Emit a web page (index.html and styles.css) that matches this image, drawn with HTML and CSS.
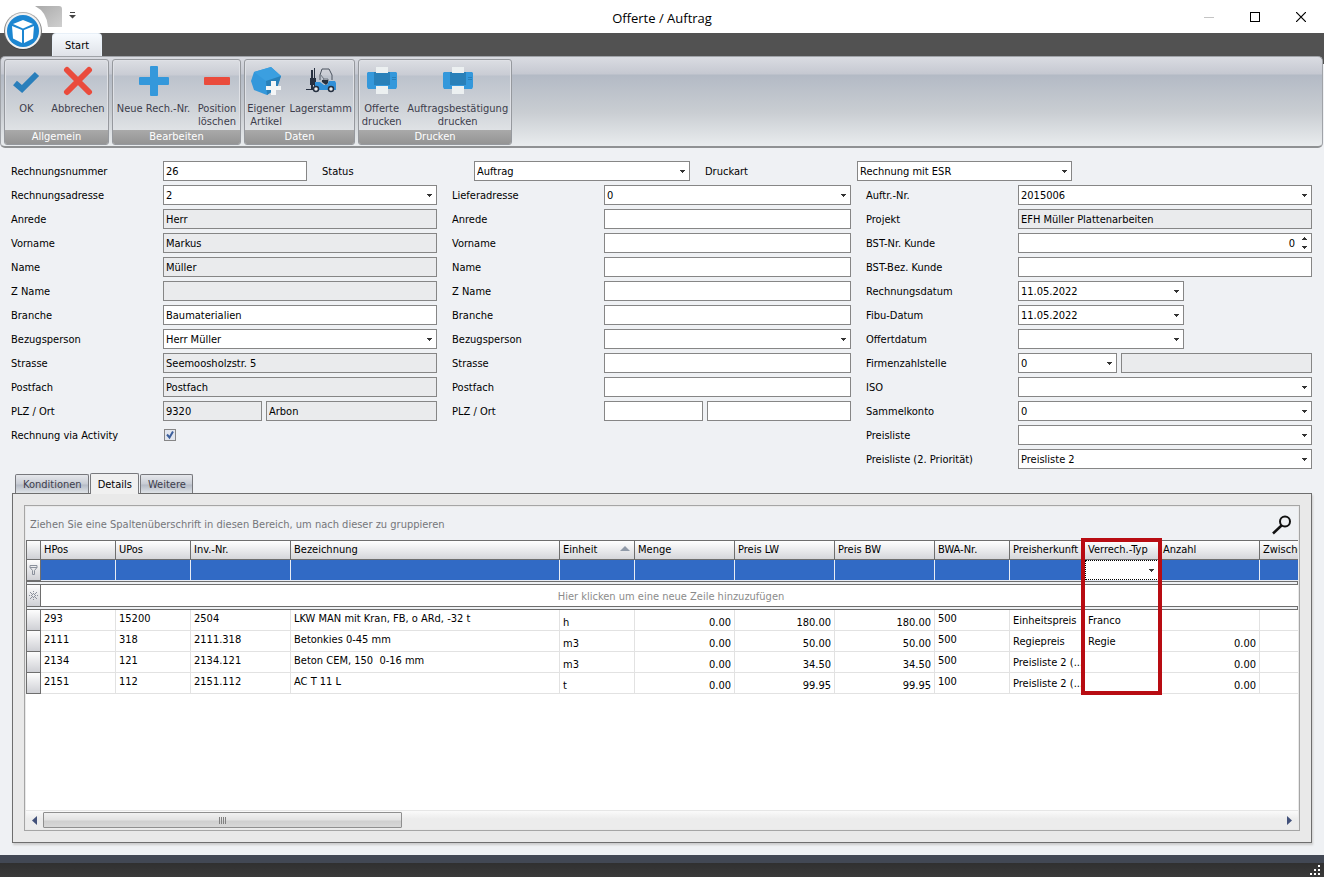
FILE: index.html
```html
<!doctype html>
<html lang="de">
<head>
    <meta charset="utf-8">
    <title>Offerte / Auftrag</title>
    <link rel="stylesheet" href="styles.css">
</head>
<body>

<header class="titlebar">
    <div class="quick">
        <svg class="orb" width="44" height="44" viewBox="0 0 44 44">
            <defs>
                <linearGradient id="ring" x1="0" y1="0" x2="0" y2="1">
                    <stop offset="0" stop-color="#b4b4b4"/>
                    <stop offset="1" stop-color="#3c3c3c"/>
                </linearGradient>
            </defs>
            <circle cx="22" cy="22" r="19" fill="url(#ring)"/>
            <circle cx="22" cy="22" r="18" fill="#f2f2f2"/>
            <circle cx="22" cy="22" r="16" fill="#1c86d1"/>
            <path d="M22 11l10 4-10 4.500-10-4.500z" fill="#fff"/>
            <path d="M11 17l10 4v13l-9-4.500zM33 17l-10 4v13l9-4.500z" fill="#fff"/>
        </svg>
        <svg class="quick-bg" width="42" height="21" viewBox="0 0 42 21">
            <defs>
                <linearGradient id="qbg" x1="0" y1="0" x2="1" y2="1">
                    <stop offset="0" stop-color="#a9a9a9"/>
                    <stop offset="1" stop-color="#cfcfcf"/>
                </linearGradient>
            </defs>
            <path d="M14 0h24q3 0 3 3v18H27Q26 6 14 0z" fill="url(#qbg)"/>
        </svg>
        <button class="quick-more" aria-label="Symbolleiste anpassen">
            <svg width="7" height="7" viewBox="0 0 7 7"><path d="M1 0h5v1H1zM0 3h7L3.500 6.500z" fill="#444"/></svg>
        </button>
    </div>
    <h1>Offerte / Auftrag</h1>
    <div class="winbtns">
        <button aria-label="Minimieren"><svg width="10" height="10"><path d="M0 5h10v1H0z" fill="#c4c4c4"/></svg></button>
        <button aria-label="Maximieren"><svg width="10" height="10"><rect x=".5" y=".5" width="9" height="9" fill="none" stroke="#000"/></svg></button>
        <button aria-label="Schliessen"><svg width="10" height="10"><path d="M0 0l10 10M10 0L0 10" stroke="#000" stroke-width="1.200"/></svg></button>
    </div>
</header>

<nav class="ribbon-tabs"><a class="ribbon-tab" href="#start">Start</a></nav>

<div class="ribbon-back">
<div class="ribbon" id="start">
    <section class="group g-allgemein">
        <div class="group-items">
            <button>
                <svg width="30" height="30" viewBox="0 0 30 30"><path d="M4 17l7 6L26 8" fill="none" stroke="#2a7fbb" stroke-width="6"/></svg>
                OK
            </button>
            <button>
                <svg width="30" height="30" viewBox="0 0 30 30"><path d="M4 4l22 22M26 4L4 26" fill="none" stroke="#ea4b3c" stroke-width="6" stroke-linecap="round"/></svg>
                Abbrechen
            </button>
        </div>
        <h2>Allgemein</h2>
    </section>
    <section class="group g-bearbeiten">
        <div class="group-items">
            <button>
                <svg width="30" height="30" viewBox="0 0 30 30"><path d="M12 0h6q1 0 1 1v10h10q1 0 1 1v6q0 1-1 1H19v10q0 1-1 1h-6q-1 0-1-1V19H1q-1 0-1-1v-6q0-1 1-1h10V1q0-1 1-1z" fill="#3498db"/></svg>
                Neue Rech.-Nr.
            </button>
            <button>
                <svg width="30" height="30" viewBox="0 0 30 30"><rect x="2" y="11" width="26" height="8" rx="1" fill="#ea4b3c"/></svg>
                Position<br>löschen
            </button>
        </div>
        <h2>Bearbeiten</h2>
    </section>
    <section class="group g-daten">
        <div class="group-items">
            <button>
                <svg width="30" height="30" viewBox="0 0 30 30">
                    <path d="M20 1l10 9-4 12-10 7-13-5L0 15 3 6z" fill="#3498db"/>
                    <path d="M20 1l10 9-15 5L3 6z" fill="#3b9fe0"/>
                    <path d="M30 10l-4 12-10 7-1-14z" fill="#2980b9"/>
                    <path d="M20 15h5v5h5v4h-5v5h-5v-5h-5v-4h5z" fill="#f4f6f7"/>
                </svg>
                Eigener<br>Artikel
            </button>
            <button>
                <svg width="30" height="30" viewBox="0 0 30 30">
                    <path d="M5 4h2v19H5zM8 2h1v21H8zM0 23h8v1H0zM4 12h6v7H4z" fill="#263040"/>
                    <path d="M14 14V9l2-6h7l3 6v5" fill="none" stroke="#4b535f"/>
                    <path d="M14 8l4 5-2 3M18 13h4v3" fill="none" stroke="#6e7680"/>
                    <path d="M9 16h5l4 3h3l2-4h6l1 2v7H9z" fill="#2f8fd8"/>
                    <path d="M16 14h6v3l-2 2-4-3z" fill="#263040"/>
                    <circle cx="10" cy="23" r="2.500" fill="#eee" stroke="#263040" stroke-width="1.500"/>
                    <circle cx="25" cy="23" r="2.500" fill="#eee" stroke="#263040" stroke-width="1.500"/>
                </svg>
                Lagerstamm
            </button>
        </div>
        <h2>Daten</h2>
    </section>
    <section class="group g-drucken">
        <div class="group-items">
            <button>
                <svg width="30" height="30" viewBox="0 0 30 30">
                    <path d="M1 6h28l1 1v14l-1 2H1l-1-2V7z" fill="#3498db"/>
                    <path d="M7 6h16v13H7zM25 11h4v1h-4zM25 13h4v1h-4z" fill="#2980b9"/>
                    <path d="M9 1h12v6H9zM9 20h12v8H9z" fill="#ecf0f1"/>
                </svg>
                Offerte<br>drucken
            </button>
            <button>
                <svg width="30" height="30" viewBox="0 0 30 30">
                    <path d="M1 6h28l1 1v14l-1 2H1l-1-2V7z" fill="#3498db"/>
                    <path d="M7 6h16v13H7zM25 11h4v1h-4zM25 13h4v1h-4z" fill="#2980b9"/>
                    <path d="M9 1h12v6H9zM9 20h12v8H9z" fill="#ecf0f1"/>
                </svg>
                Auftragsbestätigung<br>drucken
            </button>
        </div>
        <h2>Drucken</h2>
    </section>
</div>
</div>

<main>
    <form>
        <div class="head">
            <div class="row"><label for="rnr">Rechnungsnummer</label><input id="rnr" value="26"></div>
            <div class="row"><label for="status">Status</label><select id="status"><option>Auftrag</option></select></div>
            <div class="row"><label for="druckart">Druckart</label><select id="druckart"><option>Rechnung mit ESR</option></select></div>
        </div>
        <div class="cols">
            <div class="col">
                <div class="row"><label for="radr">Rechnungsadresse</label><select id="radr"><option>2</option></select></div>
                <div class="row"><label for="r1">Anrede</label><input id="r1" value="Herr" readonly></div>
                <div class="row"><label for="r2">Vorname</label><input id="r2" value="Markus" readonly></div>
                <div class="row"><label for="r3">Name</label><input id="r3" value="Müller" readonly></div>
                <div class="row"><label for="r4">Z Name</label><input id="r4" readonly></div>
                <div class="row"><label for="r5">Branche</label><input id="r5" value="Baumaterialien"></div>
                <div class="row"><label for="r6">Bezugsperson</label><select id="r6"><option>Herr Müller</option></select></div>
                <div class="row"><label for="r7">Strasse</label><input id="r7" value="Seemoosholzstr. 5" readonly></div>
                <div class="row"><label for="r8">Postfach</label><input id="r8" value="Postfach" readonly></div>
                <div class="row"><label for="r9">PLZ / Ort</label>
                    <div class="pair"><input id="r9" value="9320" readonly><input aria-label="Ort" value="Arbon" readonly></div>
                </div>
                <div class="row"><label for="act">Rechnung via Activity</label><input type="checkbox" id="act" checked></div>
            </div>
            <div class="col">
                <div class="row"><label for="ladr">Lieferadresse</label><select id="ladr"><option>0</option></select></div>
                <div class="row"><label for="l1">Anrede</label><input id="l1"></div>
                <div class="row"><label for="l2">Vorname</label><input id="l2"></div>
                <div class="row"><label for="l3">Name</label><input id="l3"></div>
                <div class="row"><label for="l4">Z Name</label><input id="l4"></div>
                <div class="row"><label for="l5">Branche</label><input id="l5"></div>
                <div class="row"><label for="l6">Bezugsperson</label><select id="l6"><option></option></select></div>
                <div class="row"><label for="l7">Strasse</label><input id="l7"></div>
                <div class="row"><label for="l8">Postfach</label><input id="l8"></div>
                <div class="row"><label for="l9">PLZ / Ort</label>
                    <div class="pair"><input id="l9"><input aria-label="Ort"></div>
                </div>
            </div>
            <div class="col">
                <div class="row"><label for="a1">Auftr.-Nr.</label><select id="a1"><option>2015006</option></select></div>
                <div class="row"><label for="a2">Projekt</label><input id="a2" value="EFH Müller Plattenarbeiten" readonly></div>
                <div class="row"><label for="a3">BST-Nr. Kunde</label><input type="number" id="a3" value="0"></div>
                <div class="row"><label for="a4">BST-Bez. Kunde</label><input id="a4"></div>
                <div class="row"><label for="a5">Rechnungsdatum</label><select class="date" id="a5"><option>11.05.2022</option></select></div>
                <div class="row"><label for="a6">Fibu-Datum</label><select class="date" id="a6"><option>11.05.2022</option></select></div>
                <div class="row"><label for="a7">Offertdatum</label><select class="date" id="a7"><option></option></select></div>
                <div class="row"><label for="a8">Firmenzahlstelle</label>
                    <div class="pair"><select id="a8"><option>0</option></select><input aria-label="Zahlstelle" readonly></div>
                </div>
                <div class="row"><label for="a9">ISO</label><select id="a9"><option></option></select></div>
                <div class="row"><label for="a10">Sammelkonto</label><select id="a10"><option>0</option></select></div>
                <div class="row"><label for="a11">Preisliste</label><select id="a11"><option></option></select></div>
                <div class="row"><label for="a12">Preisliste (2. Priorität)</label><select id="a12"><option>Preisliste 2</option></select></div>
            </div>
        </div>
    </form>

    <div class="tabs">
        <button>Konditionen</button>
        <button class="active">Details</button>
        <button>Weitere</button>
    </div>
    <section class="panel">
        <div class="grid">
            <div class="groupbar">
                <span>Ziehen Sie eine Spaltenüberschrift in diesen Bereich, um nach dieser zu gruppieren</span>
                <button aria-label="Suchen">
                    <svg width="20" height="20" viewBox="0 0 20 20"><circle cx="13" cy="6.500" r="5" fill="none" stroke="#111" stroke-width="2"/><path d="M9.500 10.500L1 18.500" stroke="#111" stroke-width="2.500"/></svg>
                </button>
            </div>
            <div class="tablebox">
                <table>
                    <colgroup>
                        <col class="w15"><col class="w75"><col class="w75"><col class="w100"><col class="w269"><col class="w75"><col class="w100"><col class="w100"><col class="w100"><col class="w75"><col class="w75"><col class="w75"><col class="w100"><col>
                    </colgroup>
                    <thead>
                        <tr>
                            <th></th><th>HPos</th><th>UPos</th><th>Inv.-Nr.</th><th>Bezeichnung</th><th class="sorted">Einheit</th><th>Menge</th><th>Preis LW</th><th>Preis BW</th><th>BWA-Nr.</th><th>Preisherkunft</th><th>Verrech.-Typ</th><th>Anzahl</th><th>Zwische</th>
                        </tr>
                    </thead>
                    <tbody>
                        <tr class="filter">
                            <td class="rowhead"><svg width="9" height="10" viewBox="0 0 9 10"><path d="M1 .5h7v2L5.500 5.500v4h-2v-4L1 2.500zM1 2.500h7" fill="none" stroke="#8b919c"/></svg></td>
                            <td></td><td></td><td></td><td></td><td></td><td></td><td></td><td></td><td></td><td></td><td class="edit"><select aria-label="Filter Verrech.-Typ"><option></option></select></td><td></td><td></td>
                        </tr>
                        <tr class="sep"><td colspan="14"></td></tr>
                        <tr class="new">
                            <td class="rowhead"><svg width="9" height="9" viewBox="0 0 9 9"><path d="M4 0h1v1H4zM4 2h1v1H4zM4 6h1v1H4zM4 8h1v1H4zM0 4h1v1H0zM2 4h1v1H2zM6 4h1v1H6zM8 4h1v1H8zM1 1h1v1H1zM3 3h1v1H3zM5 5h1v1H5zM7 7h1v1H7zM7 1h1v1H7zM5 3h1v1H5zM3 5h1v1H3zM1 7h1v1H1zM2 2h1v1H2zM6 6h1v1H6zM6 2h1v1H6zM2 6h1v1H2z" fill="#8b919c"/></svg></td>
                            <td colspan="13">Hier klicken um eine neue Zeile hinzuzufügen</td>
                        </tr>
                        <tr class="sep"><td colspan="14"></td></tr>
                        <tr>
                            <td class="rowhead"></td><td>293</td><td>15200</td><td>2504</td><td>LKW MAN mit Kran, FB, o ARd, -32 t</td><td class="unit">h</td><td class="num">0.00</td><td class="num">180.00</td><td class="num">180.00</td><td>500</td><td class="mid">Einheitspreis</td><td class="mid">Franco</td><td class="num"></td><td></td>
                        </tr>
                        <tr>
                            <td class="rowhead"></td><td>2111</td><td>318</td><td>2111.318</td><td>Betonkies 0-45 mm</td><td class="unit">m3</td><td class="num">0.00</td><td class="num">50.00</td><td class="num">50.00</td><td>500</td><td class="mid">Regiepreis</td><td class="mid">Regie</td><td class="num">0.00</td><td></td>
                        </tr>
                        <tr>
                            <td class="rowhead"></td><td>2134</td><td>121</td><td>2134.121</td><td>Beton CEM, 150&nbsp; 0-16 mm</td><td class="unit">m3</td><td class="num">0.00</td><td class="num">34.50</td><td class="num">34.50</td><td>500</td><td class="mid">Preisliste 2 (...</td><td></td><td class="num">0.00</td><td></td>
                        </tr>
                        <tr>
                            <td class="rowhead"></td><td>2151</td><td>112</td><td>2151.112</td><td>AC T 11 L</td><td class="unit">t</td><td class="num">0.00</td><td class="num">99.95</td><td class="num">99.95</td><td>100</td><td class="mid">Preisliste 2 (...</td><td></td><td class="num">0.00</td><td></td>
                        </tr>
                    </tbody>
                </table>
                <div class="marker"></div>
            </div>
            <div class="scrollbar">
                <button aria-label="Nach links"><svg width="5" height="9"><path d="M5 0v9L0 4.500z" fill="#42517a"/></svg></button>
                <div class="track"><div class="thumb"><i></i><i></i><i></i><i></i></div></div>
                <button aria-label="Nach rechts"><svg width="5" height="9"><path d="M0 0v9l5-4.500z" fill="#42517a"/></svg></button>
            </div>
        </div>
    </section>
</main>

<footer>
    <svg width="11" height="11" viewBox="0 0 11 11"><path d="M8 0h2v2H8zM4 4h2v2H4zM8 4h2v2H8zM0 8h2v2H0zM4 8h2v2H4zM8 8h2v2H8z" fill="#fff"/></svg>
</footer>

</body>
</html>
```
FILE: styles.css
```css
* {
    box-sizing: border-box;
}
body {
    margin: 0;
    min-height: 100vh;
    display: flex;
    flex-direction: column;
    background: #eff1f4;
    color: #000;
    font: 11px/14px "DejaVu Sans Condensed", "Noto Sans", sans-serif;
}
button, input, select {
    font: inherit;
    color: inherit;
    border-radius: 0;
    margin: 0;
}
button {
    border: 0;
    padding: 0;
    background: none;
}
h1, h2 {
    margin: 0;
    font-weight: normal;
}

/* Titelleiste */
.titlebar {
    position: relative;
    height: 33px;
    background: #fff;
    display: flex;
    justify-content: space-between;
}
.titlebar h1 {
    font: 13px/36px "Open Sans", sans-serif;
}
.quick, .winbtns {
    flex: 1;
    display: flex;
}
.winbtns {
    justify-content: flex-end;
}
.winbtns button {
    width: 46px;
    height: 33px;
    display: flex;
    align-items: center;
    justify-content: center;
}
.orb {
    position: absolute;
    left: 1px;
    top: 9px;
    z-index: 2;
}
.quick-bg {
    margin: 6px 6px 0 21px;
}
.quick-more {
    height: 32px;
}

/* Ribbon */
.ribbon-tabs {
    height: 23px;
    padding-left: 52px;
    background: #525252;
}
.ribbon-tab {
    display: block;
    width: 50px;
    height: 23px;
    border-radius: 4px 4px 0 0;
    background: linear-gradient(#f7fbff, #dfe2e8);
    border: 1px solid #e8f0f8;
    border-bottom: 0;
    color: #000;
    line-height: 23px;
    text-align: center;
    text-decoration: none;
}
.ribbon-back {
    background: linear-gradient(#525252 8px, #eff1f4 8px);
}
.ribbon {
    display: flex;
    gap: 3px;
    height: 92px;
    padding: 2px 3px;
    margin-right: 1px;
    border: 1px solid #a0a3a8;
    border-bottom: 2px solid #8f9193;
    border-radius: 5px;
    background: linear-gradient(#dadce2, #c5c8d1 17px, #b3bac5 18px, #c9cdd2 55px, #e9ecee);
}
.group {
    display: flex;
    flex-direction: column;
    height: 86px;
    border: 1px solid #96999e;
    border-radius: 3px;
    overflow: hidden;
    background: linear-gradient(#dcdee3, #c9ccd4 15px, #bcc2cc 16px, #d0d4d9 50px, #dfe2e5 70px);
    box-shadow: inset 0 0 0 1px #dfe1e6;
}
.g-allgemein {
    width: 105px;
}
.g-bearbeiten {
    width: 129px;
}
.g-daten {
    width: 111px;
}
.g-drucken {
    width: 154px;
}
.group-items {
    flex: 1;
    display: flex;
    justify-content: space-around;
    align-items: flex-start;
}
.group-items button {
    padding: 6px 0 0;
    min-width: 36px;
    line-height: 13px;
    color: #3d3d4c;
    white-space: nowrap;
}
.group-items button svg {
    display: block;
    margin: 0 auto 6px;
}
.group h2 {
    background: linear-gradient(#a9a9a9, #949494);
    color: #fff;
    font-size: 11px;
    line-height: 14px;
    text-align: center;
}

/* Formular */
main {
    flex: 1;
    display: flex;
    flex-direction: column;
    padding: 13px 12px 12px 11px;
}
.head {
    display: grid;
    grid-template-columns: 296fr 368fr 367fr 225fr;
    gap: 15px;
    margin-bottom: 4px;
}
.cols {
    display: grid;
    grid-template-columns: 426fr 399fr 446fr;
    gap: 15px;
}
.col {
    display: flex;
    flex-direction: column;
    gap: 4px;
}
.row {
    display: grid;
    grid-template-columns: 152px 1fr;
    align-items: center;
    height: 20px;
}
.row label {
    padding-top: 2px;
}
.row input, .row select {
    width: 100%;
    min-width: 0;
    height: 20px;
    padding: 0 2px;
    border: 1px solid #868686;
    background: #fff;
    outline: 0;
}
.row select {
    padding-top: 1px;
}
.row input[readonly] {
    background: #eaebed;
}
.row select, .edit select {
    appearance: none;
    background: #fff url("data:image/svg+xml,%3Csvg xmlns='http://www.w3.org/2000/svg' width='5' height='3'%3E%3Cpath d='M0 0h5v1H0zM1 1h3v1H1zM2 2h1v1H2z' fill='%23333'/%3E%3C/svg%3E") no-repeat right 4px center;
}
.row .date {
    width: 166px;
}
.pair {
    display: grid;
    grid-template-columns: 99px 1fr;
    gap: 4px;
}
.row input[type=number] {
    appearance: textfield;
    padding-right: 16px;
    text-align: right;
    background: #fff url("data:image/svg+xml,%3Csvg xmlns='http://www.w3.org/2000/svg' width='5' height='12'%3E%3Cpath d='M2 0h1v1H2zM1 1h3v1H1zM0 2h5v1H0zM0 9h5v1H0zM1 10h3v1H1zM2 11h1v1H2z' fill='%23333'/%3E%3C/svg%3E") no-repeat right 4px center;
}
.row input[type=number]::-webkit-inner-spin-button {
    display: none;
}
.row input[type=checkbox] {
    appearance: none;
    width: 12px;
    height: 12px;
    padding: 0;
    margin-left: 1px;
    background: #f2f4f8;
}
.row input[type=checkbox]:checked {
    background: #e2e6ee url("data:image/svg+xml,%3Csvg xmlns='http://www.w3.org/2000/svg' width='10' height='10'%3E%3Cpath d='M2 4.500l2.500 3L8 1.500' fill='none' stroke='%233c5f9c' stroke-width='2'/%3E%3C/svg%3E") no-repeat center;
}

/* Register */
.tabs {
    display: flex;
    align-items: flex-end;
    gap: 1px;
    height: 21px;
    margin: 4px 0 -1px 4px;
    z-index: 1;
}
.tabs button {
    height: 19px;
    padding: 2px 6px 0 7px;
    margin-bottom: 1px;
    border: 1px solid #77787c;
    border-bottom: 0;
    border-radius: 2px 2px 0 0;
    background: linear-gradient(#e6e8ec, #c8ccd4 9px, #b5bbc6 10px, #dfe3e7);
    color: #3d3d4c;
}
.tabs .active {
    height: 21px;
    margin-bottom: 0;
    background: #f0f0f0;
    color: #000;
}
.panel {
    flex: 1;
    display: flex;
    min-height: 350px;
    margin-left: 1px;
    padding: 11px;
    border: 1px solid #6e6e6e;
    background: #e9e9e9;
    box-shadow: 1px 2px 2px #ccc;
}
.grid {
    flex: 1;
    min-width: 0;
    display: flex;
    flex-direction: column;
    border: 1px solid #a5a5a5;
    padding: 1px;
}
.groupbar {
    display: flex;
    justify-content: space-between;
    align-items: center;
    height: 33px;
    padding: 2px 6px 0 4px;
    background: #eff1f4;
    color: #75767a;
}
.groupbar button {
    display: flex;
}
.tablebox {
    position: relative;
    flex: 1;
    background: #fff;
}

/* Tabelle */
table {
    width: 100%;
    table-layout: fixed;
    border-collapse: separate;
    border-spacing: 0;
}
.w15 {
    width: 15px;
}
.w75 {
    width: 75px;
}
.w100 {
    width: 100px;
}
.w269 {
    width: 269px;
}
th, td {
    height: 21px;
    padding: 2px 3px 0;
    border-right: 1px solid #e2e2e2;
    border-bottom: 1px solid #e2e2e2;
    text-align: left;
    vertical-align: top;
    font-weight: normal;
    line-height: 14px;
    white-space: nowrap;
    overflow: hidden;
}
th:last-child, td:last-child {
    border-right: 0;
    padding-right: 0;
}
th {
    height: 20px;
    border-top: 1px solid #6e6e6e;
    border-color: #6e6e6e;
    background: linear-gradient(#fff, #d5d6da);
}
th:first-child, .rowhead {
    padding: 0;
    border-color: #6e6e6e;
    border-left: 1px solid #6e6e6e;
    background: linear-gradient(#fdfdfd, #cfd0d5);
    text-align: center;
    vertical-align: middle;
}
.rowhead svg {
    display: block;
    margin: 0 auto;
}
.sorted {
    background: url("data:image/svg+xml,%3Csvg xmlns='http://www.w3.org/2000/svg' width='10' height='5'%3E%3Cpath d='M5 0l5 5H0z' fill='%23909aa8'/%3E%3C/svg%3E") no-repeat right 4px top 5px, linear-gradient(#fff, #d5d6da);
}
.filter td:not(.rowhead) {
    background: #316ac5;
    border-color: #e8ecf4;
}
.filter .edit {
    padding: 0;
}
.edit select {
    display: block;
    width: 100%;
    height: 20px;
    border: 1px dotted #000;
    outline: 0;
}
.sep td {
    height: 4px;
    padding: 0;
    border: 1px solid #6e6e6e;
    background: #eff1f4;
}
.sep td:last-child {
    border-right: 1px solid #6e6e6e;
}
.new td {
    border-bottom: 0;
    color: #8b8b8b;
    text-align: center;
    vertical-align: middle;
}
td.unit, td.num {
    padding-top: 6px;
}
td.num {
    text-align: right;
}
td.mid {
    padding-top: 4px;
}
/* Rahmen um die Spalte Verrech.-Typ */
.marker {
    position: absolute;
    left: 1055px;
    top: -2px;
    width: 81px;
    height: 157px;
    border: 4px solid #b80c12;
    pointer-events: none;
}

.scrollbar {
    display: flex;
    height: 19px;
    border-top: 1px solid #e6e6e6;
    background: linear-gradient(#fafafa, #ececec 8px);
}
.scrollbar button {
    width: 17px;
    display: flex;
    align-items: center;
    justify-content: center;
}
.track {
    flex: 1;
    padding-top: 1px;
}
.thumb {
    display: flex;
    align-items: center;
    justify-content: center;
    gap: 1px;
    width: 29%;
    height: 16px;
    border: 1px solid #8f8f8f;
    border-radius: 1px;
    background: linear-gradient(#f1f1f1, #e2e2e2 7px, #cfcfcf 8px, #d8d8d8);
}
.thumb i {
    width: 1px;
    height: 7px;
    background: #808080;
}

footer {
    display: flex;
    justify-content: flex-end;
    align-items: flex-end;
    height: 22px;
    padding: 0 3px 1px;
    border-top: 8px solid #424854;
    background: linear-gradient(#303030, #3a3a3a);
}
```
